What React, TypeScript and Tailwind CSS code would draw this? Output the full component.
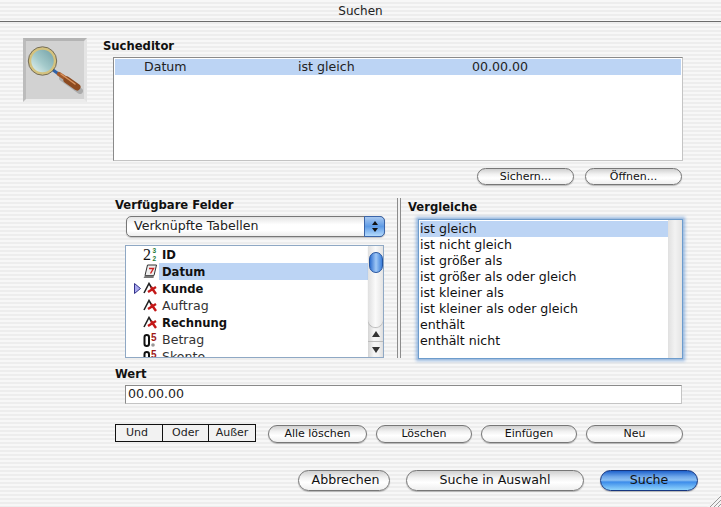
import type { ReactNode } from 'react'

// ─── Shared pieces ────────────────────────────────────────────────────────────

const labelCls = 'block text-[11.6px] leading-[14px] font-bold text-[#111]'

function AquaButton({ children, className = '' }: { children: ReactNode; className?: string }) {
  return (
    <button className={`flex items-center justify-center rounded-full border border-[#777] bg-[linear-gradient(#cfcfcf,#f2f2f2_35%,#fff_60%,#efefef)] shadow-[0_1px_1px_rgba(0,0,0,0.25)] text-[#111] ${className}`}>
      {children}
    </button>
  )
}

function FieldIcon({ type }: { type: string }) {
  if (type === 'num') {
    return (
      <svg width="18" height="16" viewBox="0 0 18 16">
        <text x="3" y="13" fontSize="16" fontFamily="Liberation Serif, serif" fill="#111">2</text>
        <text x="12.5" y="6" fontSize="6.5" fontWeight="bold" fontFamily="Liberation Sans, sans-serif" fill="#1e7a33">3</text>
        <text x="12.5" y="13.5" fontSize="6.5" fontWeight="bold" fontFamily="Liberation Sans, sans-serif" fill="#1e7a33">2</text>
      </svg>
    )
  }
  if (type === 'date') {
    return (
      <svg width="16" height="15" viewBox="0 0 16 15">
        <path d="M5.5 1h9l-2.5 10.5h-9z" fill="#eee" stroke="#333" />
        <path d="M3 11.5h9l-.5 2.5H1.5z" fill="#777" />
        <path d="M7 4.5h4.5l-3 5" fill="none" stroke="#c22" strokeWidth="1.4" />
      </svg>
    )
  }
  if (type === 'text') {
    return (
      <svg width="15" height="13" viewBox="0 0 15 13">
        <path d="M1 11 6 1.5l3 5" fill="none" stroke="#222" strokeWidth="1.6" />
        <path d="M5 10 13 5M8 5l5 7" fill="none" stroke="#c41818" strokeWidth="2.4" />
      </svg>
    )
  }
  return (
    <svg width="16" height="16" viewBox="0 0 16 16">
      <rect x="2.5" y="3" width="4.5" height="11" rx="2.2" fill="none" stroke="#111" strokeWidth="2" />
      <text x="9" y="9" fontSize="10" fontWeight="bold" fontFamily="Liberation Sans, sans-serif" fill="#a01818">5</text>
      <circle cx="11" cy="13" r="1.8" fill="#999" />
    </svg>
  )
}

// ─── Data ─────────────────────────────────────────────────────────────────────

const FIELDS = [
  { name: 'ID', icon: 'num', bold: true },
  { name: 'Datum', icon: 'date', bold: true, selected: true },
  { name: 'Kunde', icon: 'text', bold: true, arrow: true },
  { name: 'Auftrag', icon: 'text' },
  { name: 'Rechnung', icon: 'text', bold: true },
  { name: 'Betrag', icon: 'money' },
  { name: 'Skonto', icon: 'money' },
]

const COMPARES = [
  'ist gleich',
  'ist nicht gleich',
  'ist größer als',
  'ist größer als oder gleich',
  'ist kleiner als',
  'ist kleiner als oder gleich',
  'enthält',
  'enthält nicht',
]

// ─── App ──────────────────────────────────────────────────────────────────────

export default function App() {
  return (
    <div className="relative w-[721px] h-[507px] overflow-hidden flex flex-col text-[12.6px] text-[#111] font-['DejaVu_Sans',sans-serif] bg-[repeating-linear-gradient(#f7f7f7_0,#f7f7f7_2px,#ededed_2px,#ededed_4px)]">
      {/* title bar */}
      <div className="h-[22px] shrink-0 flex items-center justify-center border-b border-[#6b6b6b] rounded-t-md text-[12px] text-[#222]">
        Suchen
      </div>

      <div className="flex pl-[23px] pt-[16px]">
        {/* magnifier */}
        <div className="w-[64px] h-[64px] shrink-0 bg-[#d2d2d2] border-[3px] border-t-[#b4b4b4] border-l-[#bcbcbc] border-r-[#e4e4e4] border-b-[#ececec]">
          <svg width="58" height="58" viewBox="0 0 58 58">
            <defs>
              <linearGradient id="lens" x1="0" y1="1" x2="1" y2="0">
                <stop offset="0" stopColor="#eef8f6" />
                <stop offset="0.45" stopColor="#a4cacb" />
                <stop offset="1" stopColor="#6f9da3" />
              </linearGradient>
            </defs>
            <path d="M36 37 54 50" stroke="#555" strokeWidth="6" strokeLinecap="round" opacity="0.3" />
            <path d="M27 29 34 34" stroke="#2f62a8" strokeWidth="3" />
            <path d="M33 33 42 39" stroke="#a2592a" strokeWidth="4.5" strokeLinecap="round" />
            <path d="M41 39 51 46" stroke="#8c4a20" strokeWidth="7" strokeLinecap="round" />
            <path d="M35 33 49 43" stroke="#d8935e" strokeWidth="1.5" strokeLinecap="round" />
            <circle cx="16.5" cy="20" r="12.5" fill="url(#lens)" stroke="#d4c27e" strokeWidth="2.5" />
            <circle cx="16.5" cy="20" r="14.2" fill="none" stroke="#5c5030" strokeWidth="0.8" />
          </svg>
        </div>

        {/* Sucheditor */}
        <div className="ml-[16px] w-[580px] pt-[1px]">
          <span className={labelCls}>Sucheditor</span>
          <div className="ml-[10px] mt-[4px] w-[570px] h-[104px] bg-white border border-[#8a8a8a] border-b-[#c4c4c4] border-r-[#c4c4c4] p-[1px]">
            <div className="h-[16px] pt-[1px] bg-[#bcd4f4] flex items-center text-[#222]">
              <span className="ml-[29px] w-[154px]">Datum</span>
              <span className="w-[174px]">ist gleich</span>
              <span>00.00.00</span>
            </div>
          </div>
          <div className="mt-[7px] flex justify-end gap-[11px] w-[579px] text-[11px]">
            <AquaButton className="w-[97px] h-[17px] pt-[1px]">Sichern...</AquaButton>
            <AquaButton className="w-[97px] h-[17px] pt-[1px]">Öffnen...</AquaButton>
          </div>
        </div>
      </div>

      {/* middle: fields and compares */}
      <div className="flex mt-[11px] pl-[115px] h-[163px]">
        <div className="w-[270px]">
          <span className={`${labelCls} mt-[2px]`}>Verfügbare Felder</span>
          <div className="relative ml-[11px] mt-[4px] w-[259px] h-[21px] rounded-[5px] border border-[#777] bg-[linear-gradient(#e4e4e4,#fff_40%,#fff_70%,#eee)] shadow-[0_1px_1px_rgba(0,0,0,0.2)] flex items-center pl-[7px] text-[#222]">
            Verknüpfte Tabellen
            <div className="absolute right-[-1px] top-[-1px] w-[21px] h-[21px] rounded-r-[5px] border border-[#3a64a8] bg-[linear-gradient(#a8c8f0,#5e9be6_50%,#b4dafc)] flex flex-col items-center justify-center gap-[3px]">
              <svg width="6" height="4" viewBox="0 0 6 4"><path d="M3 0 6 4H0z" fill="#111" /></svg>
              <svg width="6" height="4" viewBox="0 0 6 4"><path d="M0 0h6L3 4z" fill="#111" /></svg>
            </div>
          </div>

          {/* field tree */}
          <div className="ml-[10px] mt-[8px] w-[259px] h-[113px] bg-white border border-[#8fa8c4] flex overflow-hidden">
            <div className="w-[242px] overflow-hidden">
              {FIELDS.map(f => (
                <div key={f.name} className="relative h-[17px] flex items-center">
                  {f.arrow && (
                    <svg className="absolute left-[8px] top-[3px]" width="7" height="11" viewBox="0 0 7 11">
                      <path d="M.5.5 6.5 5.5.5 10.5z" fill="#a9a9ee" stroke="#33338a" />
                    </svg>
                  )}
                  <div className="w-[33px] shrink-0 flex justify-end pr-[1px]">
                    <FieldIcon type={f.icon} />
                  </div>
                  <div className={`flex-1 h-full flex items-center pl-[3px] pt-[2px] ${f.selected ? 'bg-[#bcd4f4]' : ''} ${f.bold ? 'font-bold text-[11.6px] text-[#111]' : 'text-[#333]'}`}>
                    {f.name}
                  </div>
                </div>
              ))}
            </div>
            {/* scrollbar */}
            <div className="flex-1 flex flex-col bg-[linear-gradient(90deg,#d4d4d4,#f6f6f6_40%,#f2f2f2_70%,#dedede)]">
              <div className="relative h-[81px] rounded-b-full bg-[linear-gradient(90deg,#e0e0e0,#fafafa_50%,#e4e4e4)] shadow-[0_1px_1px_rgba(0,0,0,0.25)]">
                <div className="absolute left-[1px] top-[6px] w-[14px] h-[21px] rounded-full border border-[#2454a0] bg-[linear-gradient(90deg,#2f6fd0,#a0c8f6_50%,#3c7fda)]" />
              </div>
              <div className="h-[15px] border-b border-[#bbb] flex items-center justify-center">
                <svg width="8" height="6" viewBox="0 0 8 6"><path d="M4 0 8 6H0z" fill="#333" /></svg>
              </div>
              <div className="h-[15px] flex items-center justify-center">
                <svg width="8" height="6" viewBox="0 0 8 6"><path d="M0 0h8L4 6z" fill="#333" /></svg>
              </div>
            </div>
          </div>
        </div>

        {/* divider */}
        <div className="ml-[12px] mt-[2px] w-[4px] h-[160px] bg-[#f2f2f2] border-x border-[#8c8c8c]" />

        <div className="ml-[6px] w-[276px]">
          <span className={`${labelCls} mt-[4px] ml-[1px]`}>Vergleiche</span>
          <div className="ml-[11px] mt-[5px] w-[265px] h-[140px] bg-white border border-[#6d9ccc] shadow-[0_0_3px_2px_rgba(90,145,210,0.6)] flex overflow-hidden pt-[1px] pl-[1px]">
            <div className="w-[248px]">
              {COMPARES.map((c, i) => (
                <div key={c} className={`h-[16px] flex items-center text-[#111] ${i === 0 ? 'bg-[#bcd4f4]' : ''}`}>
                  {c}
                </div>
              ))}
            </div>
            <div className="w-[14px] -mt-[1px] bg-[linear-gradient(90deg,#e0e0e0,#f2f2f2_50%,#e4e4e4)]" />
          </div>
        </div>
      </div>

      {/* Wert */}
      <div className="mt-[8px] pl-[115px]">
        <span className={labelCls}>Wert</span>
        <div className="ml-[10px] mt-[4px] w-[557px] h-[19px] bg-white border border-[#8a8a8a] border-b-[#c4c4c4] border-r-[#c4c4c4] flex items-center pl-[2px] text-[#222]">
          00.00.00
        </div>
      </div>

      {/* operators and actions */}
      <div className="mt-[20px] ml-[115px] flex items-start text-[11px]">
        <div className="flex w-[141px] h-[18px] border border-[#111] bg-[#f2f2f2] text-[#222]">
          <span className="w-[47px] pr-[4px] flex items-center justify-center border-r border-[#111]">Und</span>
          <span className="w-[46px] flex items-center justify-center border-r border-[#111]">Oder</span>
          <span className="flex-1 flex items-center justify-center">Außer</span>
        </div>
        <div className="ml-[12px] mt-[1px] flex gap-[9px]">
          <AquaButton className="w-[99px] h-[18px]">Alle löschen</AquaButton>
          <AquaButton className="w-[96px] h-[18px]">Löschen</AquaButton>
          <AquaButton className="w-[96px] h-[18px]">Einfügen</AquaButton>
          <AquaButton className="w-[97px] h-[18px]">Neu</AquaButton>
        </div>
      </div>

      {/* dialog buttons */}
      <div className="mt-[27px] ml-[298px] flex gap-[16px]">
        <AquaButton className="w-[92px] h-[21px] pl-[3px]">Abbrechen</AquaButton>
        <AquaButton className="w-[178px] h-[21px]">Suche in Auswahl</AquaButton>
        <AquaButton className="w-[98px] h-[21px] !border-[#16367f] !bg-[linear-gradient(#1f62cc,#6fa8ea_30%,#8cc0f2_48%,#3d8cea_58%,#8fd4fc)]">Suche</AquaButton>
      </div>

      {/* resize grip */}
      <svg className="absolute right-0 bottom-0" width="14" height="14" viewBox="0 0 14 14">
        <path d="M0 14 14 0v14z" fill="#f4f4f4" />
        <path d="M3 14 14 3M7 14l7-7M11 14l3-3" stroke="#999" />
      </svg>
    </div>
  )
}
